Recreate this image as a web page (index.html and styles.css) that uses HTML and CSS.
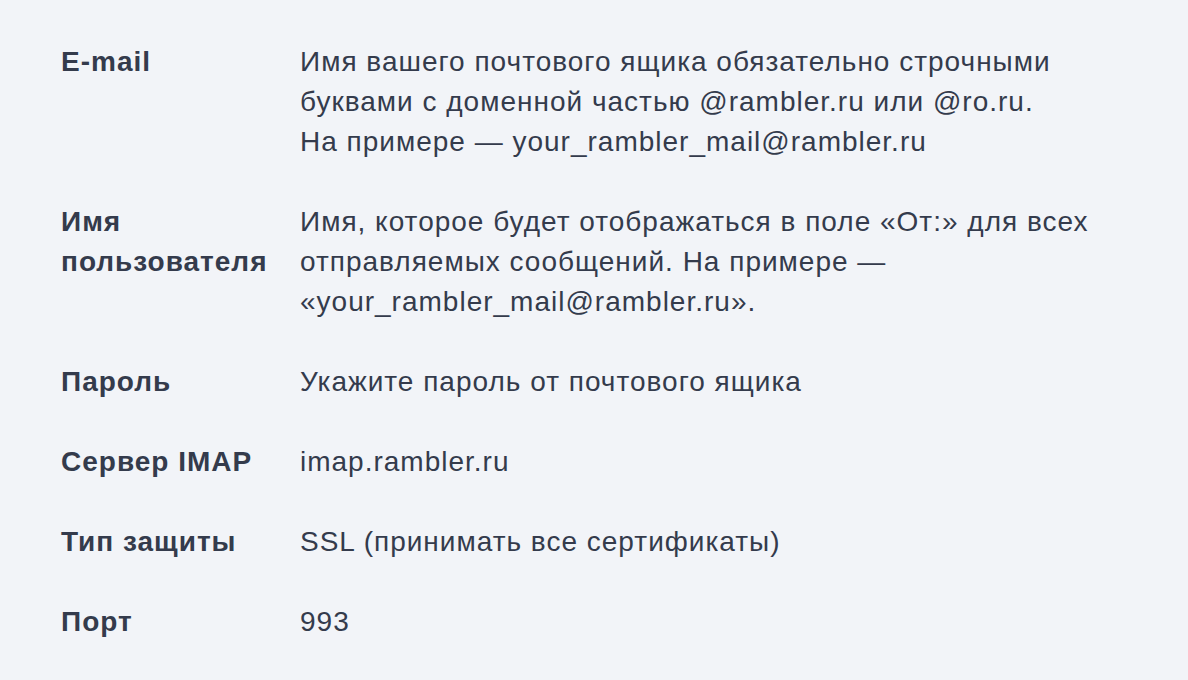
FILE: index.html
```html
<!DOCTYPE html>
<html lang="ru">
<head>
<meta charset="utf-8">
<link rel="stylesheet" href="styles.css">
</head>
<body>
<dl class="settings">
  <div class="row">
    <dt class="label">E-mail</dt>
    <dd class="value">Имя вашего почтового ящика обязательно строчными<br>буквами с доменной частью @rambler.ru или @ro.ru.<br>На примере — your_rambler_mail@rambler.ru</dd>
  </div>
  <div class="row">
    <dt class="label">Имя<br>пользователя</dt>
    <dd class="value">Имя, которое будет отображаться в поле «От:» для всех<br>отправляемых сообщений. На примере —<br>«your_rambler_mail@rambler.ru».</dd>
  </div>
  <div class="row">
    <dt class="label">Пароль</dt>
    <dd class="value">Укажите пароль от почтового ящика</dd>
  </div>
  <div class="row">
    <dt class="label">Сервер IMAP</dt>
    <dd class="value">imap.rambler.ru</dd>
  </div>
  <div class="row">
    <dt class="label">Тип защиты</dt>
    <dd class="value">SSL (принимать все сертификаты)</dd>
  </div>
  <div class="row">
    <dt class="label">Порт</dt>
    <dd class="value">993</dd>
  </div>
</dl>
</body>
</html>
```

FILE: styles.css
```css
html, body {
  margin: 0;
  padding: 0;
  background: #f2f4f8;
}
body {
  font-family: "Liberation Sans", Arial, sans-serif;
  font-size: 28px;
  line-height: 40px;
  letter-spacing: 1px;
  color: #343b4c;
}
.settings {
  margin: 0;
  padding: 42px 61px 0;
  display: flex;
  flex-direction: column;
  gap: 40px;
}
.row {
  display: flex;
}
.label {
  width: 239px;
  flex: none;
  font-weight: 700;
  margin: 0;
}
.value {
  margin: 0;
}
```
